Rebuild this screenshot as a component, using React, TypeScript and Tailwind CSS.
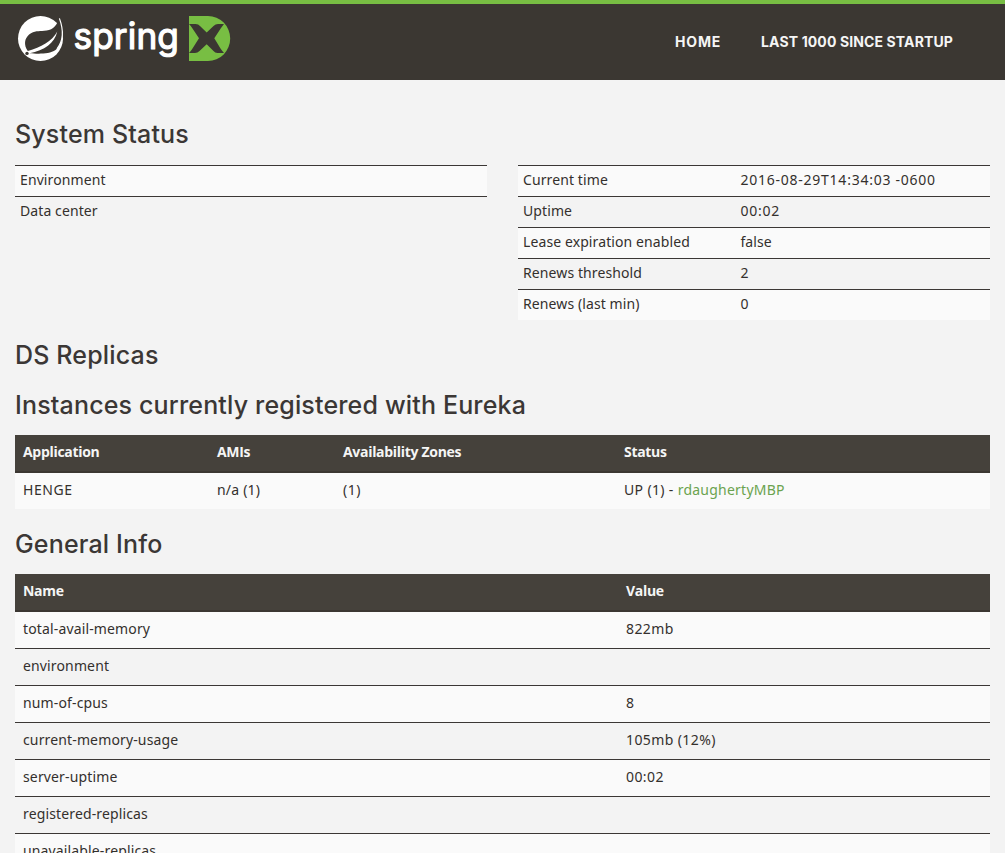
function SpringLogo() {
  return (
    <svg
      width="214"
      height="48"
      viewBox="17 14 214 48"
      className="block overflow-visible"
      role="img"
      aria-label="spring"
    >
      <circle cx="40.5" cy="38.5" r="22.5" fill="#fff" />
      <path
        d="M59.4 18.4 C57 24.5 53.5 29.5 46.6 30.6 C40 31.4 36.5 30.6 31 33.3 C25.5 36.5 23.5 42.5 26.4 48.8 L27.8 51 C41 47.5 52 41.5 57.3 31.6 C54.5 43.5 44.5 50.5 29.5 53.2 C37 53.8 49 54.5 55.5 50 C63.5 43.5 64 31.5 59.4 18.4 Z"
        fill="#3b3732"
      />
      <path d="M59.4 18.4 C63.7 30 63.4 41 57 48.8" fill="none" stroke="#fff" strokeWidth="1.2" />
      <circle cx="27" cy="53.4" r="1.7" fill="#3b3732" />
      <text
        x="73.5"
        y="48.6"
        fontFamily="Inter, sans-serif"
        fontSize="36"
        fontWeight="400"
        fill="#fff"
        stroke="#fff"
        strokeWidth="1.2"
        strokeLinejoin="round"
        textLength="105.5"
        lengthAdjust="spacingAndGlyphs"
      >
        spring
      </text>
      <path d="M189 16 H208 A22.2 22.5 0 0 1 208 61 H189 Z" fill="#78be43" />
      <path
        d="M189 24 H195.5 Q198.5 24 200 26 L206.7 32.5 L213.5 26 Q215.5 24 218 24 H224 Q222.5 26 221 28 L214.3 38.3 L220.5 48.5 Q222.5 51.5 224 53 H217.5 Q215 53 213.5 51 L206.7 44.2 L199.5 51 Q197.5 53 195 53 H189 Q191 51 192.5 48.5 L199 38.3 L192.5 28.5 Q191 26 189 24 Z"
        fill="#3b3732"
      />
    </svg>
  );
}

type Row = [string, string];

const leftStatus: Row[] = [
  ["Environment", ""],
  ["Data center", ""],
];

const rightStatus: Row[] = [
  ["Current time", "2016-08-29T14:34:03 -0600"],
  ["Uptime", "00:02"],
  ["Lease expiration enabled", "false"],
  ["Renews threshold", "2"],
  ["Renews (last min)", "0"],
];

const generalInfo: Row[] = [
  ["total-avail-memory", "822mb"],
  ["environment", ""],
  ["num-of-cpus", "8"],
  ["current-memory-usage", "105mb (12%)"],
  ["server-uptime", "00:02"],
  ["registered-replicas", ""],
  ["unavailable-replicas", ""],
];

function StatusTable({ rows }: { rows: Row[] }) {
  return (
    <div className="w-[472px]">
      {rows.map(([name, value]) => (
        <div
          key={name}
          className="flex h-[31px] border-t border-[#3b3735] pl-[5px] leading-[28px] odd:bg-[#fafafa]"
        >
          <div className="w-[217.5px]">{name}</div>
          <div className={value === "false" ? "tracking-[0.05px]" : "tracking-[0.75px]"}>{value}</div>
        </div>
      ))}
    </div>
  );
}

function Heading({ children }: { children: string }) {
  return (
    <h1 className="h-[30px] font-['Inter',sans-serif] text-[25px] leading-[30px] font-[550] tracking-[0.16px] text-[#3b3735]">
      {children}
    </h1>
  );
}

const headRow =
  "flex h-[38px] border-b-2 border-[#3b3732] bg-[#45413b] pl-2 font-['Open_Sans','Noto_Sans',sans-serif] leading-[34px] font-bold tracking-[-0.3px] text-[#f5f5f5]";

export default function App() {
  return (
    <div className="h-[853px] w-[1005px] overflow-hidden bg-[#f3f3f3] font-['Noto_Sans',sans-serif] text-[14px] tracking-[0.1px] text-[#34302d]">
      <header className="flex h-20 justify-between border-t-4 border-[#78be43] bg-[#3b3732] pt-[10px] pr-[52px] pl-[17px]">
        <SpringLogo />
        <nav className="flex h-[54px] items-center gap-10 font-['Inter',sans-serif] font-bold text-[#f5f5f5]">
          <a className="tracking-[0.8px]">HOME</a>
          <a className="tracking-[0.12px]">LAST 1000 SINCE STARTUP</a>
        </nav>
      </header>
      <main className="px-[15px] pt-[39px]">
        <Heading>System Status</Heading>
        <div className="mt-4 flex justify-between">
          <StatusTable rows={leftStatus} />
          <StatusTable rows={rightStatus} />
        </div>
        <div className="mt-5">
          <Heading>DS Replicas</Heading>
        </div>
        <div className="mt-5">
          <Heading>Instances currently registered with Eureka</Heading>
        </div>
        <div className="mt-[15px]">
          <div className={headRow}>
            <div className="w-[194px]">Application</div>
            <div className="w-[126px]">AMIs</div>
            <div className="w-[281px]">Availability Zones</div>
            <div>Status</div>
          </div>
          <div className="flex h-9 bg-[#fafafa] pl-2 leading-[33px]">
            <div className="w-[194px] tracking-[0.55px]">HENGE</div>
            <div className="w-[126px] tracking-[0.2px]">n/a (1)</div>
            <div className="w-[281px] tracking-[0.5px]">(1)</div>
            <div className="tracking-[0.35px]">
              UP (1) - <a className="tracking-[0.23px] text-[#6ba34f]">rdaughertyMBP</a>
            </div>
          </div>
        </div>
        <div className="mt-5">
          <Heading>General Info</Heading>
        </div>
        <div className="mt-[15px]">
          <div className={headRow}>
            <div className="w-[603px]">Name</div>
            <div>Value</div>
          </div>
          {generalInfo.map(([name, value]) => (
            <div
              key={name}
              className="flex h-[37px] border-b border-[#3b3735] pl-2 leading-[33px] even:bg-[#fafafa]"
            >
              <div className="w-[603px] tracking-[0.14px]">{name}</div>
              <div className="tracking-[0.4px]">{value}</div>
            </div>
          ))}
        </div>
      </main>
    </div>
  );
}
